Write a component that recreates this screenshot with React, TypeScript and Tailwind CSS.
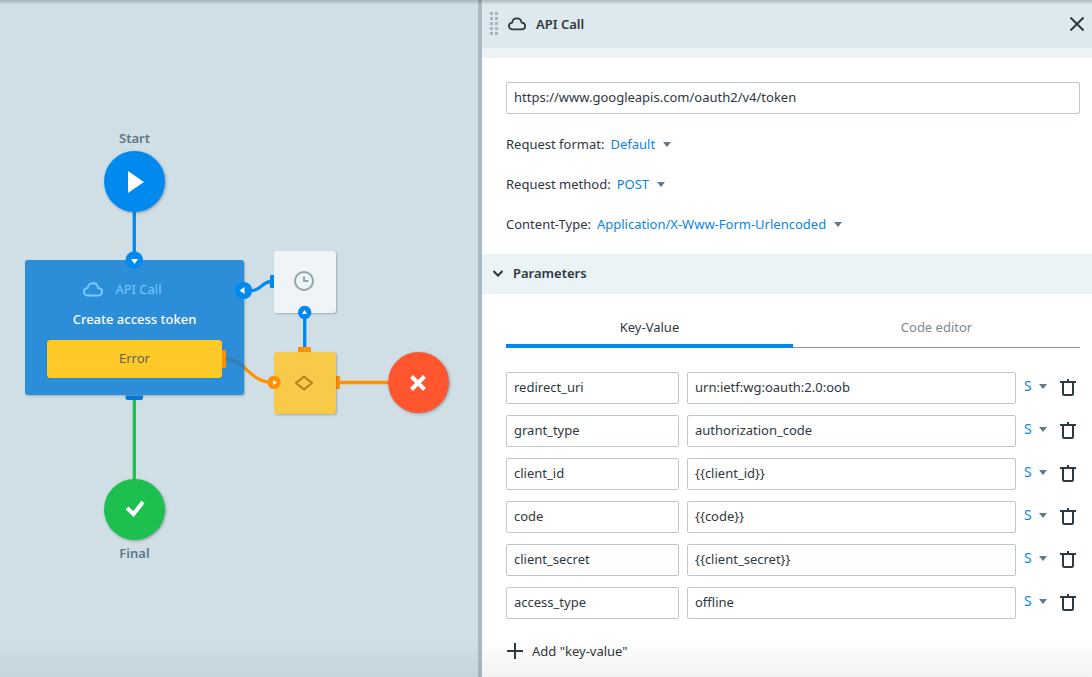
import React, { useState } from "react";

type Param = { key: string; value: string };

const initialParams: Param[] = [
  { key: "redirect_uri", value: "urn:ietf:wg:oauth:2.0:oob" },
  { key: "grant_type", value: "authorization_code" },
  { key: "client_id", value: "{{client_id}}" },
  { key: "code", value: "{{code}}" },
  { key: "client_secret", value: "{{client_secret}}" },
  { key: "access_type", value: "offline" },
];

const fieldClass =
  "h-8 w-full min-w-0 rounded-xs border border-[#bcc7cd] bg-white px-[7px] pb-[2px] text-[13px] text-[#2f3740] outline-none focus:border-[#0089ee]";

function CloudIcon({ className }: { className: string }) {
  return (
    <svg viewBox="0 0 20 15" className={className} fill="none" stroke="currentColor" strokeWidth="2" strokeLinejoin="round" aria-hidden="true">
      <path d="M5 13.500C2.700 13.500 1 11.900 1 9.700 1 7.600 2.500 6.100 4.700 5.900 5 3.200 7.200 1.300 9.800 1.300c2.700 0 4.900 1.800 5.300 4.600 2.200.1 3.900 1.700 3.900 3.800 0 2.200-1.800 3.800-4.100 3.800z" />
    </svg>
  );
}

function Caret() {
  return (
    <svg viewBox="0 0 8 5" className="pointer-events-none col-start-1 row-start-1 h-[5px] w-2 justify-self-end text-[#607986]" fill="currentColor" aria-hidden="true">
      <path d="M0 0h8L4 5z" />
    </svg>
  );
}

function InlineSelect({ id, label, options }: { id: string; label: string; options: string[] }) {
  return (
    <div className="flex h-10 items-center gap-[6px]">
      <label htmlFor={id}>{label}</label>
      <div className="grid items-center">
        <select id={id} className="col-start-1 row-start-1 cursor-pointer appearance-none bg-transparent pr-4 text-[#0a84ea] outline-none [field-sizing:content]">
          {options.map((option) => (
            <option key={option}>{option}</option>
          ))}
        </select>
        <Caret />
      </div>
    </div>
  );
}

function ParamRow({ param, index, onRemove }: { param: Param; index: number; onRemove: () => void }) {
  return (
    <li className="grid grid-cols-[173fr_329fr_56px] items-center gap-2">
      <input aria-label={`Key ${index + 1}`} defaultValue={param.key} className={fieldClass} />
      <input aria-label={`Value ${index + 1}`} defaultValue={param.value} className={fieldClass} />
      <div className="flex items-center justify-between pr-1 pb-[2px]">
        <div className="grid items-center pb-[2px]">
          <select aria-label={`Type ${index + 1}`} className="col-start-1 row-start-1 cursor-pointer appearance-none bg-transparent pr-[15px] text-[14px] text-[#0a84ea] outline-none [field-sizing:content]">
            <option>S</option>
            <option>N</option>
            <option>B</option>
          </select>
          <Caret />
        </div>
        <button type="button" aria-label="Remove parameter" onClick={onRemove} className="cursor-pointer text-[#2f3943]">
          <svg viewBox="0 0 16 18" className="h-[18px] w-4" fill="none" stroke="currentColor" strokeWidth="2" aria-hidden="true">
            <path d="M0 4h16M8 1v3M3 4v11.500q0 1.500 1.500 1.500h7q1.500 0 1.500-1.500V4" />
          </svg>
        </button>
      </div>
    </li>
  );
}

function Canvas() {
  return (
    <section aria-label="Process diagram" className="relative overflow-hidden bg-[#d0dfe6]">
      <svg className="absolute top-0 left-0 h-[677px] w-[478px]" viewBox="0 0 478 677" fill="none" strokeWidth="3.300" aria-hidden="true">
        <path d="M134.300 212v48" stroke="#0089ee" />
        <path d="M134.300 398v82" stroke="#1dbf4f" />
        <path d="M252 290.500c10 0 9-9 20-9" stroke="#0089ee" />
        <path d="M304.700 313v37" stroke="#0089ee" />
        <path d="M226 359c20 0 22 23.500 48 23.500" stroke="#ff9100" />
        <path d="M338 382.500h51" stroke="#ff9100" />
        <path d="M125.500 395.500h17.500v2.500a2 2 0 0 1-2 2h-13.500a2 2 0 0 1-2-2z" fill="#007be0" />
        <rect x="270" y="275" width="12" height="13" rx="1" fill="#0089ee" />
        <rect x="298" y="347" width="13" height="10" rx="1" fill="#ff9100" />
        <rect x="330" y="376" width="10" height="13" rx="1" fill="#ff9100" />
      </svg>

      <div className="absolute top-[128px] left-[104px] flex w-[61px] flex-col items-center gap-[3px] text-[#5d7785]">
        <span className="text-[13px] leading-5 font-semibold">Start</span>
        <div className="flex size-[61px] items-center justify-center rounded-full bg-[#0089ee] shadow-[1px_1px_3px_rgba(60,80,90,0.45)]">
          <svg viewBox="0 0 16 22" className="ml-[3px] h-[22px] w-4" aria-hidden="true">
            <path d="M0 0l16 11L0 22z" fill="#fff" />
          </svg>
        </div>
      </div>

      <article className="absolute top-[260px] left-[25px] flex h-[135px] w-[219px] flex-col items-center rounded-[3px] bg-[rgba(12,125,215,0.84)] px-[22px] pt-[18px] shadow-[1px_1px_2px_rgba(60,80,90,0.35)]">
        <div className="mr-6 flex h-[22px] items-center gap-3 text-[#78c9ff]">
          <CloudIcon className="h-[15px] w-5" />
          <span className="text-[13px]">API Call</span>
        </div>
        <h2 className="mt-2 text-[13px] leading-[22px] font-medium text-white">Create access token</h2>
        <div className="mt-[10px] flex h-[38px] w-[175px] items-center justify-center rounded-[3px] bg-[#ffc928] pb-[2px] text-[13px] text-[#5f6357] shadow-[0_0_1px_rgba(0,60,110,0.5)]">
          Error
        </div>
      </article>

      <div className="absolute top-[251px] left-[274px] flex size-[62px] items-center justify-center rounded-[3px] bg-[#eff4f6] shadow-[1px_1px_2px_rgba(60,80,90,0.35)]">
        <svg viewBox="0 0 20 20" className="mr-[2px] mb-[2px] size-5" fill="none" stroke="#90a4ae" strokeWidth="2" aria-hidden="true">
          <circle cx="10" cy="10" r="9" />
          <path d="M10 5.500V10h4.500" />
        </svg>
      </div>

      <div className="absolute top-[352px] left-[274px] flex size-[62px] items-center justify-center rounded-[3px] bg-[#f7ca4a] shadow-[1px_1px_2px_rgba(60,80,90,0.35)]">
        <svg viewBox="0 0 18 16" className="mr-[2px] h-4 w-[18px]" fill="none" stroke="#ad8319" strokeWidth="2" strokeLinejoin="round" aria-hidden="true">
          <path d="M9 1.500l8 6.500-8 6.500L1 8z" />
        </svg>
      </div>

      <div className="absolute top-[352px] left-[388px] flex size-[61px] items-center justify-center rounded-full bg-[#ff5630] shadow-[1px_1px_3px_rgba(60,80,90,0.45)]">
        <svg viewBox="0 0 16 16" className="mr-[2px] size-4" stroke="#fff" strokeWidth="4" aria-hidden="true">
          <path d="M1.500 1.500l13 13M14.500 1.500l-13 13" />
        </svg>
      </div>

      <div className="absolute top-[479px] left-[104px] flex w-[61px] flex-col items-center gap-[3px] text-[#5d7785]">
        <div className="flex size-[61px] items-center justify-center rounded-full bg-[#1dbf4f] pb-[2px] shadow-[1px_1px_3px_rgba(60,80,90,0.45)]">
          <svg viewBox="0 0 20 17" className="h-[17px] w-5" fill="none" stroke="#fff" strokeWidth="4" aria-hidden="true">
            <path d="M2 8l6.500 6L18 2" />
          </svg>
        </div>
        <span className="text-[13px] leading-5 font-semibold">Final</span>
      </div>

      <svg className="pointer-events-none absolute top-0 left-0 h-[677px] w-[478px]" viewBox="0 0 478 677" aria-hidden="true">
        <path d="M222 350h2.500a1.500 1.500 0 0 1 1.500 1.500v15a1.500 1.500 0 0 1-1.500 1.500H222z" fill="#ff9100" />
        <g fill="#0089ee">
          <circle cx="134.300" cy="260" r="8.700" />
          <circle cx="243.500" cy="290.500" r="8.700" />
          <circle cx="304.700" cy="312.500" r="6.700" />
        </g>
        <circle cx="274" cy="382.500" r="6.700" fill="#ff9100" />
        <g fill="#fff">
          <path d="M131 259h7l-3.500 5z" />
          <path d="M244.500 287v7l-5-3.500z" />
          <path d="M302 314h5l-2.500-4z" />
          <path d="M273 380v5l4-2.500z" />
        </g>
      </svg>
    </section>
  );
}

function Panel() {
  const [tab, setTab] = useState(0);
  const [params, setParams] = useState(initialParams);
  const tabs = ["Key-Value", "Code editor"];

  return (
    <aside className="flex min-w-0 flex-col border-l-4 border-[#aabac4] bg-white">
      <header className="flex h-12 items-center bg-[#dde9ee] pr-2 pb-px pl-2">
        <svg viewBox="0 0 8 23" className="h-[23px] w-2" fill="#a5b4bd" aria-hidden="true">
          {[0, 5, 10, 15, 20].map((y) => (
            <path key={y} d={`M0 ${y}h3v3H0zM5 ${y}h3v3H5z`} />
          ))}
        </svg>
        <CloudIcon className="ml-[10px] h-[14px] w-[18px]" />
        <h1 className="ml-[10px] text-[13px] font-semibold">API Call</h1>
        <button type="button" aria-label="Close" className="ml-auto cursor-pointer">
          <svg viewBox="0 0 14 14" className="size-[14px]" stroke="currentColor" strokeWidth="2" aria-hidden="true">
            <path d="M.5.500l13 13M13.500.500l-13 13" />
          </svg>
        </button>
      </header>
      <div className="h-[10px] bg-[#ebf3f6]" />

      <div className="pt-6 pr-3 pb-[10px] pl-6">
        <input aria-label="URL" defaultValue="https://www.googleapis.com/oauth2/v4/token" className={fieldClass} />
        <div className="pt-[10px]">
          <InlineSelect id="format" label="Request format:" options={["Default", "Raw"]} />
          <InlineSelect id="method" label="Request method:" options={["POST", "GET", "PUT", "DELETE"]} />
          <InlineSelect id="content-type" label="Content-Type:" options={["Application/X-Www-Form-Urlencoded", "Application/Json"]} />
        </div>
      </div>

      <button type="button" aria-expanded="true" className="flex h-10 items-center gap-[10px] bg-[#ebf3f6] pb-[2px] pl-[11px] font-semibold">
        <svg viewBox="0 0 10 7" className="h-[7px] w-[10px]" fill="none" stroke="currentColor" strokeWidth="2" aria-hidden="true">
          <path d="M.5 1L5 5.500 9.500 1" />
        </svg>
        Parameters
      </button>

      <div className="flex grow flex-col pt-[14px] pr-3 pl-6">
        <div role="tablist" className="grid grid-cols-2">
          {tabs.map((name, i) => (
            <button
              key={name}
              type="button"
              role="tab"
              aria-selected={tab === i}
              onClick={() => setTab(i)}
              className={
                tab === i
                  ? "h-10 border-b-4 border-[#0089ee] pt-[2px]"
                  : "h-10 border-b border-[#8a949b] pb-px text-[#7d8890]"
              }
            >
              {name}
            </button>
          ))}
        </div>
        <ul className="mt-6 flex flex-col gap-[11px]">
          {params.map((param, i) => (
            <ParamRow key={param.key} param={param} index={i} onRemove={() => setParams(params.filter((p) => p !== param))} />
          ))}
        </ul>
        <button
          type="button"
          onClick={() => setParams([...params, { key: "", value: "" }])}
          className="mt-5 flex h-6 cursor-pointer items-center gap-[9px] self-start pl-px"
        >
          <svg viewBox="0 0 16 16" className="size-4" stroke="currentColor" strokeWidth="2" aria-hidden="true">
            <path d="M0 8h16M8 0v16" />
          </svg>
          Add "key-value"
        </button>
      </div>
    </aside>
  );
}

export default function App() {
  return (
    <main className="relative grid min-h-screen grid-cols-[239fr_307fr] font-['Noto_Sans',sans-serif] text-[13px] leading-5 text-[#2f3740]">
      <Canvas />
      <Panel />
      <div className="pointer-events-none absolute inset-x-0 top-0 h-[5px] bg-linear-to-b from-black/20 to-transparent" />
      <div className="pointer-events-none absolute inset-x-0 bottom-0 h-10 bg-linear-to-t from-black/5 to-transparent" />
    </main>
  );
}
